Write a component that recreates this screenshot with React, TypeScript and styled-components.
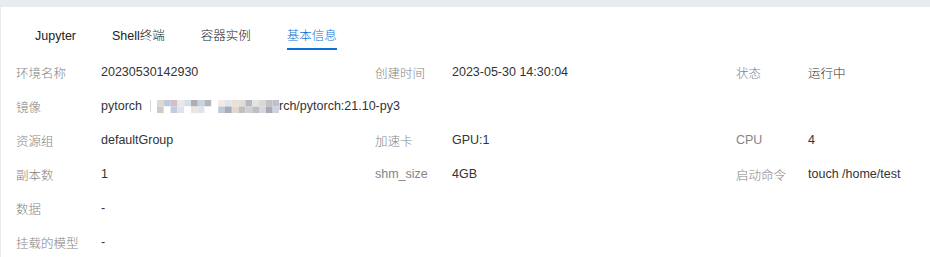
import React from 'react';
import styled, { createGlobalStyle } from 'styled-components';

const GlobalStyle = createGlobalStyle`
  html, body {
    margin: 0;
    padding: 0;
    background: #e8ebf0;
  }
  body {
    font-family: "Liberation Sans", "Noto Sans CJK SC", sans-serif;
    font-size: 12.5px;
    font-weight: 300;
  }
`;

const Card = styled.div`
  margin: 7px 0 0 1px;
  background: #fff;
  min-height: 250px;
`;

const TabBar = styled.div`
  display: flex;
  gap: 36px;
  padding: 0 34px;
  height: 43px;
`;

const Tab = styled.div<{ $active?: boolean }>`
  padding-top: 21px;
  line-height: 16px;
  padding-bottom: 5px;
  border-bottom: 2px solid ${({ $active }) => ($active ? '#0a6fd6' : 'transparent')};
  color: ${({ $active }) => ($active ? '#0a6fd6' : '#222')};
  cursor: pointer;
`;

const InfoGrid = styled.div`
  display: grid;
  grid-template-columns: 85px 274px 77px 284px 72px 1fr;
  grid-auto-rows: 34px;
  margin-top: 5px;
  padding-left: 15px;
`;

const Label = styled.div`
  display: flex;
  align-items: center;
  color: #848484;
  white-space: nowrap;
`;

const Value = styled.div<{ $wide?: boolean }>`
  display: flex;
  align-items: center;
  color: #333;
  white-space: nowrap;
  grid-column: ${({ $wide }) => ($wide ? 'span 5' : 'auto')};
`;

const Divider = styled.span`
  display: inline-block;
  width: 1px;
  height: 12px;
  background: #d8d8d8;
  margin: 0 6px 0 8px;
`;

const mosaicTop = [
  '#e2d6d2', '#bcc8dc', '#d2c0c6', '#e8e8e8', '#d8dee6', '#aeaeb8', '#c8d2e0', '#b4b4bc', '#ffffff',
  '#f4eae4', '#dce6f0', '#ece2d4', '#e0dcd8', '#b4b8c2', '#e2e6dc', '#dcd6d6', '#c4c0c6', '#bcc2cc',
];
const mosaicBottom = [
  '#d0cac6', '#ffffff', '#c0cce2', '#e2e2ec', '#ffffff', '#ebe6e2', '#e2e2ec', '#ffffff', '#ffffff',
  '#c0c8da', '#acacb6', '#e2d8d2', '#c2bebe', '#d0d0d0', '#bebec4', '#d6d6dc', '#a8a8b8', '#cdd2dc',
];

function Mosaic() {
  return (
    <svg width="122" height="13" viewBox="0 0 122 13">
      {mosaicTop.map((c, i) => (
        <rect key={`t${i}`} x={i * 6.8} y={0} width={6.8} height={6.5} fill={c} />
      ))}
      {mosaicBottom.map((c, i) => (
        <rect key={`b${i}`} x={i * 6.8} y={6.5} width={6.8} height={6.5} fill={c} />
      ))}
    </svg>
  );
}

const tabs = ['Jupyter', 'Shell终端', '容器实例', '基本信息'];

export default function App() {
  return (
    <>
      <GlobalStyle />
      <Card>
        <TabBar>
          {tabs.map((t) => (
            <Tab key={t} $active={t === '基本信息'}>{t}</Tab>
          ))}
        </TabBar>
        <InfoGrid>
          <Label>环境名称</Label>
          <Value>20230530142930</Value>
          <Label>创建时间</Label>
          <Value>2023-05-30 14:30:04</Value>
          <Label>状态</Label>
          <Value>运行中</Value>

          <Label>镜像</Label>
          <Value $wide>
            pytorch
            <Divider />
            <Mosaic />
            rch/pytorch:21.10-py3
          </Value>

          <Label>资源组</Label>
          <Value>defaultGroup</Value>
          <Label>加速卡</Label>
          <Value>GPU:1</Value>
          <Label>CPU</Label>
          <Value>4</Value>

          <Label>副本数</Label>
          <Value>1</Value>
          <Label>shm_size</Label>
          <Value>4GB</Value>
          <Label>启动命令</Label>
          <Value>touch /home/test</Value>

          <Label>数据</Label>
          <Value $wide>-</Value>

          <Label>挂载的模型</Label>
          <Value $wide>-</Value>
        </InfoGrid>
      </Card>
    </>
  );
}
